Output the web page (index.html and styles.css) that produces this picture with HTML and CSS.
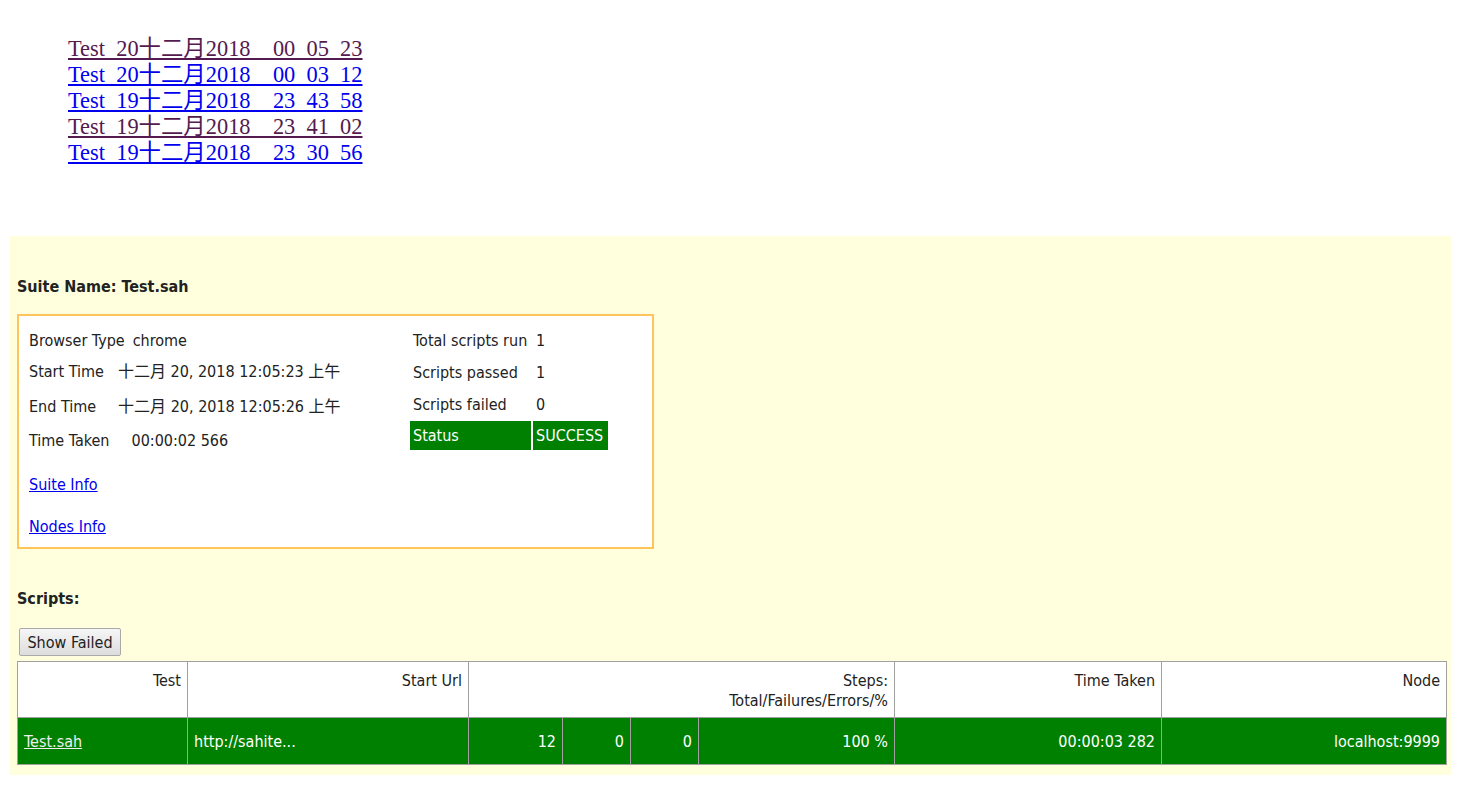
FILE: index.html
```html
<!DOCTYPE html>
<html>
<head>
<meta charset="utf-8">
<link rel="stylesheet" href="styles.css">
</head>
<body>
<ul class="runs">
  <li><a class="visited" href="#">Test_20十二月2018__00_05_23</a></li>
  <li><a href="#">Test_20十二月2018__00_03_12</a></li>
  <li><a href="#">Test_19十二月2018__23_43_58</a></li>
  <li><a class="visited" href="#">Test_19十二月2018__23_41_02</a></li>
  <li><a href="#">Test_19十二月2018__23_30_56</a></li>
</ul>
<div class="spacer"></div>
<div class="report">
  <div class="suite-name">Suite Name: Test.sah</div>
  <div class="info">
    <div class="left">
      <div class="row r1"><span class="lbl">Browser Type</span><span class="v1">chrome</span></div>
      <div class="row r2"><span class="lbl">Start Time</span><span class="v2">十二月 20, 2018 12:05:23 上午</span></div>
      <div class="row r3"><span class="lbl">End Time</span><span class="v2b">十二月 20, 2018 12:05:26 上午</span></div>
      <div class="row r4"><span class="lbl">Time Taken</span><span class="v3">00:00:02 566</span></div>
      <div class="row r5"><a href="#">Suite Info</a></div>
      <div class="row r6"><a href="#">Nodes Info</a></div>
    </div>
    <div class="right">
      <div class="srow"><span class="slbl">Total scripts run</span><span class="sval">1</span></div>
      <div class="srow"><span class="slbl">Scripts passed</span><span class="sval">1</span></div>
      <div class="srow"><span class="slbl">Scripts failed</span><span class="sval">0</span></div>
      <div class="srow status"><span class="slbl">Status</span><span class="sval">SUCCESS</span></div>
    </div>
  </div>
  <div class="scripts-title">Scripts:</div>
  <button class="btn">Show Failed</button>
  <table class="scripts">
    <colgroup>
      <col style="width:170px"><col style="width:281px"><col style="width:94px"><col style="width:68px"><col style="width:68px"><col style="width:196px"><col style="width:267px"><col style="width:285px">
    </colgroup>
    <thead>
      <tr>
        <th>Test</th>
        <th>Start Url</th>
        <th colspan="4">Steps:<br>Total/Failures/Errors/%</th>
        <th>Time Taken</th>
        <th>Node</th>
      </tr>
    </thead>
    <tbody>
      <tr>
        <td class="l"><a href="#">Test.sah</a></td>
        <td class="l">http://sahite...</td>
        <td>12</td>
        <td>0</td>
        <td>0</td>
        <td>100 %</td>
        <td>00:00:03 282</td>
        <td>localhost:9999</td>
      </tr>
    </tbody>
  </table>
</div>
</body>
</html>
```

FILE: styles.css
```css
html, body {
  margin: 0;
  padding: 0;
  background: #ffffff;
}
body {
  font-family: "Liberation Serif", "Noto Sans CJK SC", serif;
}
.runs {
  list-style: none;
  margin: 0;
  padding: 36px 0 0 68px;
  font-size: 22.4px;
  line-height: 26px;
}
.runs a {
  color: #0000ee;
  text-decoration: underline;
}
.runs a.visited {
  color: #551a4f;
}
.spacer {
  height: 70px;
}
.report {
  margin-left: 10px;
  width: 1441px;
  height: 539px;
  background: #ffffdd;
  box-sizing: border-box;
  padding: 41px 0 0 7px;
  font-family: "DejaVu Sans Condensed", "Noto Sans CJK SC", sans-serif;
  font-size: 16px;
  color: #222;
}
.suite-name {
  font-weight: bold;
  height: 20px;
  line-height: 20px;
}
.info {
  margin-top: 17px;
  width: 637px;
  height: 235px;
  box-sizing: border-box;
  border: 2px solid #ffc55a;
  background: #fff;
  display: flex;
}
.left {
  width: 391px;
  padding: 14px 0 0 10px;
  box-sizing: border-box;
}
.row {
  height: 22px;
  line-height: 22px;
  white-space: nowrap;
}
.r2 { margin-top: 9px; }
.r3 { margin-top: 13px; }
.r4 { margin-top: 12px; }
.r5 { margin-top: 22px; }
.r6 { margin-top: 20px; }
.lbl { display: inline-block; }
.v1 { margin-left: 8px; }
.v2 { margin-left: 14px; }
.v2b { margin-left: 22px; }
.v3 { margin-left: 22px; }
.row a {
  color: #0000ee;
  text-decoration: underline;
}
.right {
  padding: 14px 0 0 0;
  display: flex;
  flex-direction: column;
}
.srow {
  display: flex;
  gap: 2px;
  height: 22px;
  line-height: 22px;
  margin-bottom: 10px;
}
.srow .slbl {
  width: 121px;
  padding-left: 3px;
  box-sizing: border-box;
}
.srow .sval {
  width: 75px;
  padding-left: 3px;
  box-sizing: border-box;
}
.srow.status {
  height: 29px;
  line-height: 29px;
  margin-top: -5px;
}
.srow.status span {
  background: #008000;
  color: #fff;
  padding-left: 3px;
}
.scripts-title {
  font-weight: bold;
  margin-top: 40px;
  height: 20px;
  line-height: 20px;
}
.btn {
  margin: 19px 0 0 2px;
  width: 102px;
  height: 28px;
  box-sizing: border-box;
  font-family: "DejaVu Sans Condensed", sans-serif;
  font-size: 16px;
  color: #222;
  background: linear-gradient(#f6f6f6, #dddddd);
  border: 1px solid #a9a9a9;
  border-radius: 2px;
  padding: 0;
  display: block;
}
.scripts {
  margin-top: 5px;
  border-collapse: collapse;
  table-layout: fixed;
  width: 1429px;
}
.scripts th {
  background: #fff;
  font-weight: normal;
  text-align: right;
  vertical-align: top;
  height: 56px;
  box-sizing: border-box;
  padding: 9px 6px 0 6px;
  border: 1px solid #a0a0a0;
  line-height: 20px;
}
.scripts td {
  background: #008000;
  color: #fff;
  text-align: right;
  height: 47px;
  box-sizing: border-box;
  padding: 0 6px;
  border: 1px solid #a0a0a0;
}
.scripts td.l {
  text-align: left;
}
.scripts td a {
  color: #eee;
  text-decoration: underline;
}
```
